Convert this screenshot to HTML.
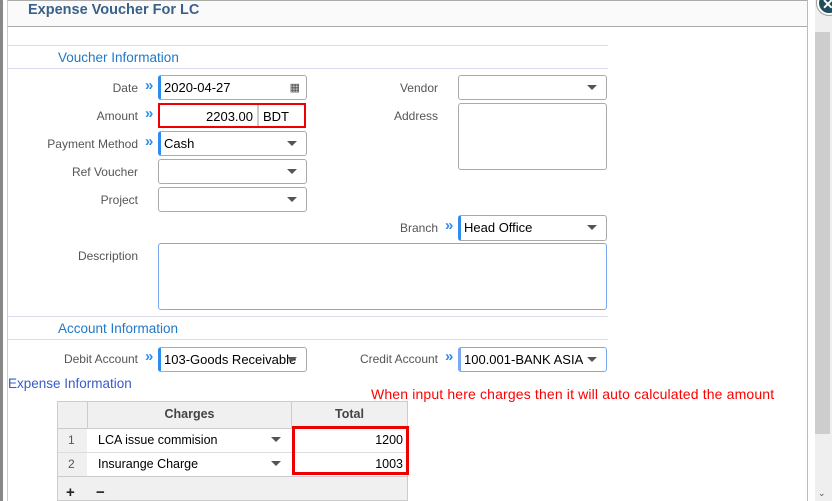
<!DOCTYPE html>
<html><head><style>
*{margin:0;padding:0;box-sizing:border-box}
body{width:832px;height:501px;overflow:hidden;background:#fff;font-family:"Liberation Sans",sans-serif;position:relative}
.a{position:absolute}
.lbl{position:absolute;font-size:12px;color:#555;text-align:right;width:130px;line-height:14px}
.chev{position:absolute;color:#2e8bf0;font-size:15px;line-height:14px;font-weight:bold}
.in{position:absolute;border:1px solid #aaa;border-radius:3px;background:#fff;font-size:13px;color:#000;padding-left:3px;line-height:24px;overflow:hidden;white-space:nowrap}
.req{border-left:3px solid #2e8bf0}
.blue{border-color:#7aa8f0}
.dd::after{content:"";position:absolute;right:9px;top:9px;border-left:5px solid transparent;border-right:5px solid transparent;border-top:5px solid #555}
.hl{position:absolute;left:8px;width:600px;height:1px;background:#dcdcee}
.sec{position:absolute;left:58px;font-size:13.5px;color:#1f78c8}
</style></head><body>
<div class="a" style="left:0;top:0;width:3px;height:501px;background:#888"></div>
<div class="a" style="left:7px;top:0;width:801px;height:27px;background:#fafafa;border-top:1px solid #aaa;border-bottom:1px solid #aaa;border-left:1px solid #ccc"></div>
<div class="a" style="left:7px;top:27px;width:1px;height:474px;background:#ccc"></div>
<div class="a" style="left:807px;top:0;width:1px;height:501px;background:#bbb"></div>
<div class="a" style="left:28px;top:2px;font-size:14.5px;font-weight:bold;color:#3a6187">Expense Voucher For LC</div>
<div class="a" style="left:815px;top:0;width:17px;height:501px;background:#efefef"></div>
<div class="a" style="left:815px;top:32px;width:15px;height:402px;background:#cdcdcd"></div>
<div class="a" style="left:818px;top:488px;font-size:9px;color:#555">&#8964;</div>
<div class="a" style="left:817px;top:-9px;width:24px;height:24px;border-radius:50%;background:#1f4d5c;border:2px solid #fff;box-shadow:0 0 0 1px #999"></div>
<div class="a" style="left:822px;top:-4px;color:#fff;font-size:14px;font-weight:bold">✕</div>

<div class="hl" style="top:45px"></div>
<div class="sec" style="top:50px">Voucher Information</div>
<div class="hl" style="top:68px"></div>

<div class="lbl" style="left:8px;top:81px">Date</div><div class="chev" style="left:145px;top:79px">»</div>
<div class="in req" style="left:158px;top:75px;width:149px;height:25px">2020-04-27<span style="position:absolute;right:6px;top:0;font-size:11px;color:#444">&#9638;</span></div>
<div class="lbl" style="left:8px;top:109px">Amount</div><div class="chev" style="left:145px;top:107px">»</div>
<div class="a" style="left:158px;top:103px;width:148px;height:25px;border:2px solid #e00;background:#fff"></div>
<div class="a" style="left:257px;top:105px;width:2px;height:21px;background:#ccc"></div>
<div class="a" style="left:160px;top:105px;width:93px;text-align:right;font-size:13px;line-height:23px">2203.00</div>
<div class="a" style="left:263px;top:105px;font-size:13px;line-height:23px">BDT</div>
<div class="lbl" style="left:8px;top:137px">Payment Method</div><div class="chev" style="left:145px;top:135px">»</div>
<div class="in req dd" style="left:158px;top:131px;width:149px;height:25px">Cash</div>
<div class="lbl" style="left:8px;top:165px">Ref Voucher</div>
<div class="in dd" style="left:158px;top:159px;width:149px;height:25px"></div>
<div class="lbl" style="left:8px;top:193px">Project</div>
<div class="in dd" style="left:158px;top:187px;width:149px;height:25px"></div>

<div class="lbl" style="left:308px;top:81px">Vendor</div>
<div class="in dd" style="left:458px;top:75px;width:149px;height:25px"></div>
<div class="lbl" style="left:308px;top:109px">Address</div>
<div class="in" style="left:458px;top:103px;width:149px;height:67px"></div>
<div class="lbl" style="left:308px;top:221px">Branch</div><div class="chev" style="left:445px;top:219px">»</div>
<div class="in req dd" style="left:458px;top:215px;width:149px;height:26px">Head Office</div>
<div class="lbl" style="left:8px;top:249px">Description</div>
<div class="in blue" style="left:158px;top:243px;width:449px;height:67px"></div>

<div class="hl" style="top:316px"></div>
<div class="sec" style="top:321px">Account Information</div>
<div class="hl" style="top:339px"></div>
<div class="lbl" style="left:8px;top:352px">Debit Account</div><div class="chev" style="left:145px;top:350px">»</div>
<div class="in req dd" style="left:158px;top:347px;width:149px;height:25px">103-Goods Receivable</div>
<div class="lbl" style="left:308px;top:352px">Credit Account</div><div class="chev" style="left:445px;top:350px">»</div>
<div class="in req blue dd" style="left:458px;top:347px;width:149px;height:25px"><span style="display:inline-block;width:122px;overflow:hidden">100.001-BANK ASIA LTD</span></div>

<div class="a" style="left:8px;top:376px;font-size:13.5px;color:#3a5cc8">Expense Information</div>
<div class="a" style="left:371px;top:386px;font-size:14px;color:#f00;letter-spacing:0.15px">When input here charges then it will auto calculated the amount</div>

<div class="a" style="left:57px;top:401px;width:351px;height:100px;border:1px solid #ccc;background:#f0f0f0"></div>
<div class="a" style="left:87px;top:401px;width:1px;height:27px;background:#ccc"></div>
<div class="a" style="left:291px;top:401px;width:1px;height:27px;background:#ccc"></div>
<div class="a" style="left:88px;top:407px;width:203px;text-align:center;font-size:12.5px;font-weight:bold;color:#444">Charges</div>
<div class="a" style="left:292px;top:407px;width:115px;text-align:center;font-size:12.5px;font-weight:bold;color:#444">Total</div>
<div class="a" style="left:58px;top:428px;width:349px;height:48px;background:#fff;border-top:1px solid #ccc"></div>
<div class="a" style="left:58px;top:429px;width:29px;height:47px;background:#f0f0f0"></div>
<div class="a" style="left:58px;top:452px;width:349px;height:1px;background:#ddd"></div>
<div class="a" style="left:58px;top:476px;width:349px;height:1px;background:#ccc"></div>
<div class="a" style="left:68px;top:433px;font-size:12px;color:#555">1</div>
<div class="a" style="left:68px;top:457px;font-size:12px;color:#555">2</div>
<div class="a" style="left:98px;top:433px;font-size:12.5px">LCA issue commision</div>
<div class="a" style="left:98px;top:457px;font-size:12.5px">Insurange Charge</div>
<div class="a" style="left:271px;top:437px;border-left:5px solid transparent;border-right:5px solid transparent;border-top:5px solid #555"></div>
<div class="a" style="left:271px;top:461px;border-left:5px solid transparent;border-right:5px solid transparent;border-top:5px solid #555"></div>
<div class="a" style="left:292px;top:426px;width:117px;height:49px;border:3px solid #e00"></div>
<div class="a" style="left:300px;top:433px;width:103px;text-align:right;font-size:12.5px">1200</div>
<div class="a" style="left:300px;top:457px;width:103px;text-align:right;font-size:12.5px">1003</div>
<div class="a" style="left:66px;top:484px;font-size:15px;font-weight:bold;color:#222">+</div>
<div class="a" style="left:96px;top:484px;font-size:15px;font-weight:bold;color:#222">−</div>
</body></html>
